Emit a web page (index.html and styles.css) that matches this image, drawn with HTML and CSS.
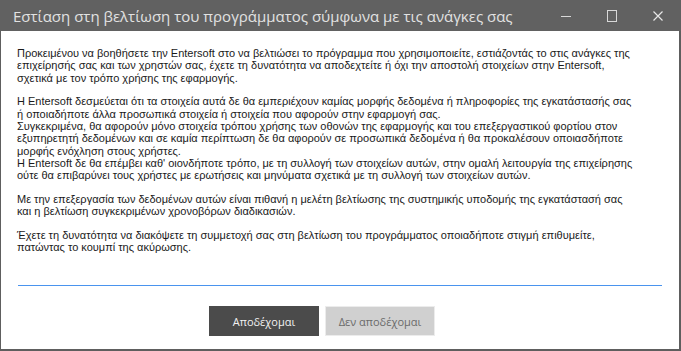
FILE: index.html
```html
<!doctype html>
<html>
<head>
  <meta charset="utf-8">
  <link rel="stylesheet" href="styles.css">
</head>
<body>
  <div class="window">
    <div class="titlebar">
      <span class="title">Εστίαση στη βελτίωση του προγράμματος σύμφωνα με τις ανάγκες σας</span>
      <div class="controls">
        <span class="ctl">
          <svg width="12" height="12" viewBox="0 0 12 12"><path d="M1 6.5h10" stroke="#d8d8d8" stroke-width="1"/></svg>
        </span>
        <span class="ctl">
          <svg width="12" height="12" viewBox="0 0 12 12"><rect x="1.5" y="0.5" width="9" height="11" fill="none" stroke="#d8d8d8" stroke-width="1"/></svg>
        </span>
        <span class="ctl">
          <svg width="12" height="12" viewBox="0 0 12 12"><path d="M1.5 1.5l9 9M10.5 1.5l-9 9" stroke="#e8e8e8" stroke-width="1.2"/></svg>
        </span>
      </div>
    </div>

    <div class="content">
      <div class="message">
        <p>Προκειμένου να βοηθήσετε την Entersoft στο να βελτιώσει το πρόγραμμα που χρησιμοποιείτε, εστιάζοντάς το στις ανάγκες της<br>
        επιχείρησής σας και των χρηστών σας, έχετε τη δυνατότητα να αποδεχτείτε ή όχι την αποστολή στοιχείων στην Entersoft,<br>
        σχετικά με τον τρόπο χρήσης της εφαρμογής.</p>

        <p>Η Entersoft δεσμεύεται ότι τα στοιχεία αυτά δε θα εμπεριέχουν καμίας μορφής δεδομένα ή πληροφορίες της εγκατάστασής σας<br>
        ή οποιαδήποτε άλλα προσωπικά στοιχεία ή στοιχεία που αφορούν στην εφαρμογή σας.<br>
        Συγκεκριμένα, θα αφορούν μόνο στοιχεία τρόπου χρήσης των οθονών της εφαρμογής και του επεξεργαστικού φορτίου στον<br>
        εξυπηρετητή δεδομένων και σε καμία περίπτωση δε θα αφορούν σε προσωπικά δεδομένα ή θα προκαλέσουν  οποιασδήποτε<br>
        μορφής ενόχληση στους χρήστες.<br>
        Η Entersoft δε θα επέμβει καθ' οιονδήποτε τρόπο, με τη συλλογή των στοιχείων αυτών, στην ομαλή λειτουργία της επιχείρησης<br>
        ούτε θα επιβαρύνει τους χρήστες με ερωτήσεις και μηνύματα σχετικά με τη συλλογή των στοιχείων αυτών.</p>

        <p>Με την επεξεργασία των δεδομένων αυτών είναι πιθανή η μελέτη βελτίωσης της συστημικής υποδομής της εγκατάστασή σας<br>
        και η βελτίωση συγκεκριμένων χρονοβόρων διαδικασιών.</p>

        <p>Έχετε τη δυνατότητα να διακόψετε τη συμμετοχή σας στη βελτίωση του προγράμματος οποιαδήποτε στιγμή επιθυμείτε,<br>
        πατώντας το κουμπί της ακύρωσης.</p>
      </div>

      <div class="separator"></div>

      <div class="buttons">
        <button class="btn accept">Αποδέχομαι</button>
        <button class="btn decline">Δεν αποδέχομαι</button>
      </div>
    </div>
  </div>
</body>
</html>
```

FILE: styles.css
```css
html, body {
  margin: 0;
  padding: 0;
  background: #ffffff;
}

.window {
  width: 681px;
  height: 351px;
  display: flex;
  flex-direction: column;
  box-sizing: border-box;
}

.titlebar {
  height: 31px;
  background-color: #616161;
  display: flex;
  align-items: center;
  justify-content: space-between;
  padding-left: 13px;
  flex-shrink: 0;
}

.title {
  font-family: "Open Sans", "Noto Sans", sans-serif;
  font-size: 15px;
  color: #e2e2e2;
  white-space: nowrap;
}

.controls {
  display: flex;
  height: 31px;
}

.ctl {
  width: 46px;
  display: flex;
  align-items: center;
  justify-content: center;
}

.content {
  flex: 1;
  display: flex;
  flex-direction: column;
  border-left: 1px solid #5e5e5e;
  border-right: 2px solid #5e5e5e;
  border-bottom: 2px solid #5e5e5e;
  background: #ffffff;
}

.message {
  padding: 16px 0 0 16px;
  font-family: "Liberation Sans", Arial, sans-serif;
  font-size: 11px;
  line-height: 12.3px;
  color: #1a1a1a;
  height: 254px;
  box-sizing: border-box;
}

.message p {
  margin: 0 0 11.5px 0;
  white-space: nowrap;
}

.separator {
  height: 1px;
  background-color: #4a94ee;
  margin: 0 17px 0 17px;
}

.buttons {
  display: flex;
  gap: 6px;
  padding: 20px 0 0 208px;
}

.btn {
  width: 110px;
  height: 30px;
  font-family: "Open Sans", "Noto Sans", sans-serif;
  font-size: 11px;
  border: none;
  padding: 0;
}

.accept {
  background-color: #4b4b4b;
  color: #f2f2f2;
}

.decline {
  background-color: #d0d0d0;
  color: #6a6a6a;
  border: 1px solid #ececec;
}
```
